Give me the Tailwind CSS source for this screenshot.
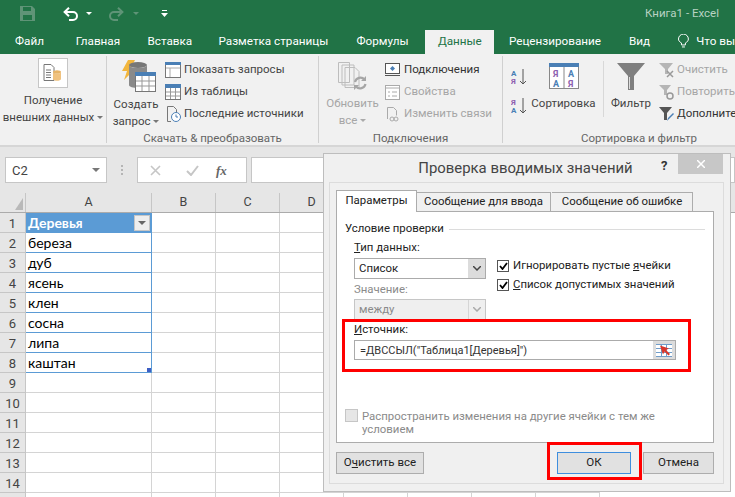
<!DOCTYPE html>
<html lang="ru">
<head>
<meta charset="UTF-8">
<title>Книга1 - Excel</title>
<script src="https://cdn.jsdelivr.net/npm/@tailwindcss/browser@4"></script>
</head>
<body class="font-['Roboto',sans-serif]">
<div class="relative w-[735px] h-[497px] overflow-hidden bg-[#e6e6e6] text-[11.5px] leading-none text-[#444] whitespace-nowrap">

  <!-- заголовок окна -->
  <div class="h-[27px] bg-[#217346] flex items-center relative">
    <svg class="ml-[20px] w-[15px] h-[15px]" viewBox="0 0 15 15"><path d="M0 0h12l3 3v12H0z" fill="#5f9477"/><path d="M3 1h8v4H3zM3 9h9v5H3z" fill="#217346"/></svg>
    <svg class="ml-[28px] w-[16px] h-[14px]" viewBox="0 0 16 14" fill="none" stroke="#fff" stroke-width="2"><path d="M1.500 5H10a4 4 0 0 1 0 8H6"/><path d="M6 .8 1.600 5 6 9.200"/></svg>
    <svg class="ml-[7px] w-[6px] h-[3px]" viewBox="0 0 6 3"><path d="M0 0h6L3 3z" fill="#fff"/></svg>
    <svg class="ml-[16px] w-[16px] h-[14px]" viewBox="0 0 16 14" fill="none" stroke="#5f9477" stroke-width="2"><path d="M14.500 5H6a4 4 0 0 0 0 8h4"/><path d="M10 .8 14.400 5 10 9.200"/></svg>
    <svg class="ml-[9px] w-[6px] h-[3px]" viewBox="0 0 6 3"><path d="M0 0h6L3 3z" fill="#5f9477"/></svg>
    <svg class="ml-[22px] w-[7px] h-[7px]" viewBox="0 0 7 7"><path d="M1 0h5v1H1zM0 3h7L3.500 7z" fill="#fff"/></svg>
    <span class="absolute left-[645px] top-[8px] text-[11.5px] text-[#b9d2c3]">Книга1 - Excel</span>
  </div>

  <!-- вкладки -->
  <div class="h-[27px] pt-[3px] bg-[#217346] flex text-white text-[11.7px]">
    <span class="ml-[15px] w-[29px] flex items-center justify-center">Файл</span>
    <span class="ml-[32px] w-[44px] flex items-center justify-center">Главная</span>
    <span class="ml-[29px] w-[42px] flex items-center justify-center">Вставка</span>
    <span class="ml-[29px] w-[107px] flex items-center justify-center">Разметка страницы</span>
    <span class="ml-[29px] w-[54px] flex items-center justify-center">Формулы</span>
    <span class="ml-[16px] w-[70px] bg-[#f1f1f1] text-[#217346] flex items-center justify-center">Данные</span>
    <span class="ml-[15px] w-[91px] flex items-center justify-center">Рецензирование</span>
    <span class="ml-[29px] w-[20px] flex items-center justify-center">Вид</span>
    <svg class="ml-[29px] mt-[4px] w-[11px] h-[15px]" viewBox="0 0 11 15" fill="none" stroke="#fff"><path d="M3.500 11V9C1.500 8 .5 6.500.5 5a5 5 0 0 1 10 0c0 1.500-1 3-3 4v2zM4 13h3"/></svg>
    <span class="ml-[7px] flex items-center">Что вы</span>
  </div>

  <!-- лента -->
  <div class="h-[93px] bg-[#f1f1f1] border-b-2 border-[#d6d6d6] flex">
    <div class="w-[107px] shrink-0 h-[87px] mt-[2px] border-r border-[#d0d0d0] flex flex-col items-center">
      <div class="w-[30px] h-[30px] mt-[2px] bg-white border border-[#c6c6c6] flex items-center justify-center">
        <svg class="w-[20px] h-[18px]" viewBox="0 0 20 18"><path d="M1 .5h7l3 3v13H1z" fill="#fff" stroke="#777"/><path d="M3 6h5M3 8.500h5M3 11h5M3 13.500h5" stroke="#777"/><ellipse cx="14" cy="8" rx="4" ry="1.800" fill="#e7b468"/><path d="M10 8v7c0 2.400 8 2.400 8 0V8c0 2.400-8 2.400-8 0z" fill="#f0c27f"/></svg>
      </div>
      <span class="mt-[7px]">Получение</span>
      <span class="mt-[5px]">внешних данных <i class="inline-block border-x-[3px] border-t-[3px] border-x-transparent border-t-[#777] align-middle"></i></span>
    </div>

    <div class="w-[212px] shrink-0 h-[87px] mt-[2px] border-r border-[#d0d0d0]">
      <div class="flex h-[69px]">
        <div class="w-[58px] shrink-0 flex flex-col items-center">
          <svg class="w-[34px] h-[32px] ml-[6px] mt-[4px] shrink-0" viewBox="0 0 34 32"><path d="M6 0h7L9 8h5L2 20l3-9H0z" fill="#f2b63d"/><ellipse cx="16" cy="5" rx="9" ry="3" fill="#777"/><path d="M7 5v20c0 4 18 4 18 0V5c0 4-18 4-18 0z" fill="#8a8a8a"/><rect x="13.500" y="12.500" width="20" height="19" fill="#fff" stroke="#777"/><rect x="13" y="12" width="21" height="4" fill="#4a7fb5"/><path d="M14 21h19M14 26h19M20 16v15M27 16v15" stroke="#999"/></svg>
          <span class="mt-[7px]">Создать</span>
          <span class="mt-[5px]">запрос <i class="inline-block border-x-[3px] border-t-[3px] border-x-transparent border-t-[#777] align-middle"></i></span>
        </div>
        <div class="flex flex-col pt-[3px]">
          <div class="h-[23px] flex items-center gap-[3px]">
            <svg class="w-[16px] h-[16px]" viewBox="0 0 16 16"><rect x=".5" y=".5" width="15" height="15" fill="#fff" stroke="#777"/><rect width="16" height="3" fill="#4a7fb5"/><path d="M1 6h14M5 6v9" stroke="#aaa"/></svg>
            <span>Показать запросы</span>
          </div>
          <div class="h-[23px] flex items-center gap-[3px]">
            <svg class="w-[16px] h-[16px]" viewBox="0 0 16 16"><rect x=".5" y=".5" width="15" height="15" fill="#fff" stroke="#777"/><rect width="16" height="4" fill="#4a7fb5"/><path d="M1 8h14M1 12h14M5.500 4v11M10.500 4v11" stroke="#999"/></svg>
            <span>Из таблицы</span>
          </div>
          <div class="h-[23px] flex items-center gap-[3px]">
            <svg class="w-[16px] h-[16px]" viewBox="0 0 16 16"><path d="M2.500.5h6l3 3v4M6 15.500H2.500V.5" fill="none" stroke="#777"/><circle cx="11" cy="11" r="4.500" fill="#fff" stroke="#4a7fb5"/><path d="M11 8.500V11h2" fill="none" stroke="#4a7fb5"/></svg>
            <span>Последние источники</span>
          </div>
        </div>
      </div>
      <div class="text-center mt-[8px] text-[#666]">Скачать &amp; преобразовать</div>
    </div>

    <div class="w-[184px] shrink-0 h-[87px] mt-[2px] border-r border-[#d0d0d0] text-[#a6a6a6]">
      <div class="flex h-[69px]">
        <div class="w-[66px] shrink-0 flex flex-col items-center pl-[1px]">
          <svg class="w-[30px] h-[29px] mt-[6px] shrink-0" viewBox="0 0 30 29" fill="none" stroke="#bdbdbd"><path d="M.5.500h11v20H.5zM4 3h12v20H4zM7 5.500h10l4 4v16H7z" fill="#f1f1f1"/><path d="M17 20a5.500 5.500 0 0 1 9.500-2.500M27.500 22a5.500 5.500 0 0 1-9.500 2.500" stroke="#a6a6a6" stroke-width="2.200"/><path d="M28 14v5h-5zM16 28v-5h5z" fill="#a6a6a6" stroke="none"/></svg>
          <span class="mt-[7px]">Обновить</span>
          <span class="mt-[5px]">все <i class="inline-block border-x-[3px] border-t-[3px] border-x-transparent border-t-[#aaa] align-middle"></i></span>
        </div>
        <div class="flex flex-col pt-[3px]">
          <div class="h-[23px] flex items-center gap-[4px] text-[#333]">
            <svg class="w-[15px] h-[15px]" viewBox="0 0 15 15"><rect x=".5" y=".5" width="14" height="10" fill="#fff" stroke="#555"/><path d="M7.500 3 10 5.500 7.500 8 5 5.500z" fill="#4a7fb5"/><path d="M0 12.500h15" stroke="#555"/></svg>
            <span>Подключения</span>
          </div>
          <div class="h-[23px] flex items-center gap-[4px]">
            <svg class="w-[15px] h-[15px]" viewBox="0 0 15 15"><rect x=".5" y=".5" width="14" height="14" fill="#fff" stroke="#aaa"/><path d="M1 3h13M3 7h2M7 7h5M3 11h2M7 11h5" stroke="#aaa"/></svg>
            <span>Свойства</span>
          </div>
          <div class="h-[23px] flex items-center gap-[4px]">
            <svg class="w-[15px] h-[15px]" viewBox="0 0 15 15" fill="none" stroke="#aaa"><path d="M2.500 12V.5h6l3 3v5"/><circle cx="7" cy="12" r="2"/><circle cx="11" cy="12" r="2"/></svg>
            <span>Изменить связи</span>
          </div>
        </div>
      </div>
      <div class="text-center mt-[8px] text-[#666]">Подключения</div>
    </div>

    <div class="w-[232px] shrink-0 h-[87px] mt-[2px]">
      <div class="flex h-[69px]">
        <div class="w-[28px] shrink-0 pl-[8px] flex flex-col pt-[12px] gap-[11px]">
          <svg class="w-[17px] h-[18px]" viewBox="0 0 17 18"><text x="0" y="8" font-size="8" font-weight="700" fill="#4a7fb5">А</text><text x="0" y="16" font-size="8" font-weight="700" fill="#8d5fb0">Я</text><path d="M12 1v15M9 13l3 3 3-3" fill="none" stroke="#555"/></svg>
          <svg class="w-[17px] h-[18px]" viewBox="0 0 17 18"><text x="0" y="8" font-size="8" font-weight="700" fill="#8d5fb0">Я</text><text x="0" y="16" font-size="8" font-weight="700" fill="#4a7fb5">А</text><path d="M12 1v15M9 13l3 3 3-3" fill="none" stroke="#555"/></svg>
        </div>
        <div class="w-[73px] shrink-0 flex flex-col items-center border-r border-[#d8d8d8] h-[56px] mt-[5px] pr-[7px]">
          <svg class="w-[30px] h-[26px] mt-[2px] shrink-0" viewBox="0 0 30 26"><rect x=".5" y=".5" width="29" height="25" fill="#fff" stroke="#888"/><rect width="30" height="4" fill="#4a7fb5"/><path d="M15 4v22" stroke="#888"/><text x="4" y="14" font-size="9" font-weight="700" fill="#8d5fb0">Я</text><text x="19" y="14" font-size="9" font-weight="700" fill="#4a7fb5">А</text><text x="4" y="24" font-size="9" font-weight="700" fill="#4a7fb5">А</text><text x="19" y="24" font-size="9" font-weight="700" fill="#8d5fb0">Я</text></svg>
          <span class="mt-[9px]">Сортировка</span>
        </div>
        <div class="w-[54px] shrink-0 flex flex-col items-center pt-[7px]">
          <svg class="w-[28px] h-[27px] shrink-0" viewBox="0 0 28 27"><path d="M0 0h28L17 13v14h-6V13z" fill="#7f7f7f"/><path d="M12 14h1v12h-1z" fill="#ddd"/></svg>
          <span class="mt-[8px]">Фильтр</span>
        </div>
        <div class="flex flex-col pt-[3px] pl-[1px] text-[#a6a6a6]">
          <div class="h-[23px] flex items-center gap-[3px]">
            <svg class="w-[15px] h-[15px]" viewBox="0 0 15 15"><path d="M0 0h14L9 6v5H6V6z" fill="#b5b5b5"/><path d="M8 8l6 6M14 8l-6 6" stroke="#999" stroke-width="1.500"/></svg>
            <span>Очистить</span>
          </div>
          <div class="h-[23px] flex items-center gap-[3px]">
            <svg class="w-[15px] h-[15px]" viewBox="0 0 15 15"><path d="M0 0h12L8 5v5H5V5z" fill="#b5b5b5"/><circle cx="11" cy="11" r="3" fill="none" stroke="#999" stroke-width="1.500"/></svg>
            <span>Повторить</span>
          </div>
          <div class="h-[23px] flex items-center gap-[3px] text-[#333]">
            <svg class="w-[15px] h-[15px]" viewBox="0 0 15 15"><path d="M0 0h13L8 6v7H5V6z" fill="#555"/><path d="M8 14l1-3 5-5 1 1-5 5z" fill="#4a7fb5"/></svg>
            <span>Дополнительно</span>
          </div>
        </div>
      </div>
      <div class="text-center mt-[8px] pl-[40px] text-[#666]">Сортировка и фильтр</div>
    </div>
  </div>

  <!-- строка формул -->
  <div class="h-[46px] flex pt-[10px] text-[13px]">
    <div class="ml-[5px] w-[102px] h-[26px] bg-white border border-[#c6c6c6] flex items-center justify-between pl-[6px] pr-[6px]">
      <span>C2</span>
      <i class="border-x-[4px] border-t-[4px] border-x-transparent border-t-[#777]"></i>
    </div>
    <div class="w-[30px] h-[26px] flex flex-col items-center justify-center gap-[2px]">
      <i class="w-[2px] h-[2px] bg-[#b5b5b5]"></i><i class="w-[2px] h-[2px] bg-[#b5b5b5]"></i><i class="w-[2px] h-[2px] bg-[#b5b5b5]"></i>
    </div>
    <div class="w-[110px] h-[26px] bg-white border border-[#c6c6c6] flex items-center pl-[12px]">
      <svg class="w-[11px] h-[11px]" viewBox="0 0 11 11" fill="none" stroke="#c6c6c6" stroke-width="1.600"><path d="m1 1 9 9M10 1l-9 9"/></svg>
      <svg class="ml-[25px] w-[13px] h-[11px]" viewBox="0 0 13 11" fill="none" stroke="#c6c6c6" stroke-width="2"><path d="m1 6 4 4 7-9"/></svg>
      <span class="ml-[17px] font-['Liberation_Serif',serif] italic font-bold text-[#666]">fx</span>
    </div>
    <div class="ml-[4px] flex-1 h-[26px] bg-white border border-[#c6c6c6]"></div>
  </div>

  <!-- лист -->
  <div id="sheet" class="bg-white font-['Lato',sans-serif] text-[14px] text-black"></div>

  <!-- диалог -->
  <div class="absolute left-[323px] top-[153px] w-[408px] h-[339px] bg-[#f0f0f0] border border-[#bdbdbd] flex flex-col text-[11.4px] text-[#222]">
    <div class="w-full h-[28px] flex items-center justify-center relative shrink-0">
      <span class="text-[14.9px] text-[#444] mr-[3px] mt-[1px]">Проверка вводимых значений</span>
      <span class="absolute left-[337px] top-[5px] font-bold text-[#333] text-[13px]">?</span>
      <span class="absolute left-[354px] top-0 w-[45px] h-[20px] bg-[#c7c7c7] flex items-center justify-center">
        <svg class="w-[8px] h-[8px]" viewBox="0 0 8 8" stroke="#fff" stroke-width="1.500"><path d="m0 0 8 8M8 0 0 8"/></svg>
      </span>
    </div>
    <div class="ml-[5px] w-[395px] h-[302px] border border-[#dcdcdc] px-[6px] pt-[7px]">
      <div class="flex items-end h-[22px] relative z-10">
        <div class="w-[81px] h-[22px] bg-white border border-b-0 border-[#acacac] flex items-center justify-center pb-[1px]">Параметры</div>
        <div class="w-[134px] h-[20px] bg-[#f0f0f0] border border-l-0 border-[#acacac] flex items-center justify-center">Сообщение для ввода</div>
        <div class="w-[141px] h-[20px] bg-[#f0f0f0] border border-l-0 border-[#acacac] flex items-center justify-center ml-px">Сообщение об ошибке</div>
      </div>
      <div class="w-[378px] h-[232px] -mt-px bg-white border border-[#acacac] px-[8px] pt-[10px]">
        <div class="flex items-center gap-[5px] h-[14px]">
          <span>Условие проверки</span>
          <i class="w-[258px] h-px bg-[#dcdcdc]"></i>
        </div>
        <div class="pl-[9px]">
          <div class="mt-[6px] h-[15px]"><u>Т</u>ип данных:</div>
          <div class="flex mt-[1px]">
            <div class="w-[132px]">
              <div class="h-[21px] border border-[#ababab] flex items-center justify-between pl-[4px]">
                <span>Список</span>
                <span class="w-[17px] h-full bg-[#dcdcdc] flex items-center justify-center">
                  <svg class="w-[8px] h-[5px]" viewBox="0 0 8 5" fill="none" stroke="#444" stroke-width="1.500"><path d="m0 0 4 4 4-4"/></svg>
                </span>
              </div>
              <div class="mt-[5px] h-[15px] text-[#8a8a8a]">Значение:</div>
              <div class="h-[21px] bg-[#efefef] border border-[#c6c6c6] flex items-center justify-between pl-[4px] text-[#8a8a8a]">
                <span>между</span>
                <span class="w-[17px] h-full flex items-center justify-center border-l border-[#d5d5d5]">
                  <svg class="w-[8px] h-[5px]" viewBox="0 0 8 5" fill="none" stroke="#aaa" stroke-width="1.500"><path d="m0 0 4 4 4-4"/></svg>
                </span>
              </div>
            </div>
            <div class="ml-[11px] flex flex-col gap-[7px] pt-[2px]">
              <label class="flex items-center gap-[4px] h-[12px]">
                <span class="w-[12px] h-[12px] border border-[#555] flex items-center justify-center"><svg class="w-[9px] h-[8px]" viewBox="0 0 9 8" fill="none" stroke="#000" stroke-width="1.800"><path d="m1 4 2.500 3L8 1"/></svg></span>
                <span>Игнорировать пустые <u>я</u>чейки</span>
              </label>
              <label class="flex items-center gap-[4px] h-[12px]">
                <span class="w-[12px] h-[12px] border border-[#555] flex items-center justify-center"><svg class="w-[9px] h-[8px]" viewBox="0 0 9 8" fill="none" stroke="#000" stroke-width="1.800"><path d="m1 4 2.500 3L8 1"/></svg></span>
                <span><u>С</u>писок допустимых значений</span>
              </label>
            </div>
          </div>
          <div class="mt-[4px] h-[15px]"><u>И</u>сточник:</div>
          <div class="mt-[1px] w-[322px] h-[20px] border border-[#ababab] flex items-center justify-between pl-[5px] text-[#333] text-[11px]">
            <span>=ДВССЫЛ("Таблица1[Деревья]")</span>
            <span class="w-[22px] h-full bg-[#dcdcdc] flex items-center justify-center">
              <svg class="w-[16px] h-[13px]" viewBox="0 0 16 13"><rect width="16" height="13" fill="#fff"/><path d="M0 .5h16M0 4.500h16M0 8.500h16M0 12.500h16M5.500 0v13M10.500 0v13" stroke="#6f9cc9"/><path d="M4 1.500l9 3-3 1.500 4 4-1.500 1.500-4-4-1.500 3z" fill="#d9362b"/></svg>
            </span>
          </div>
        </div>
        <div class="mt-[49px] flex text-[#8a8a8a] leading-[13px]">
          <span class="w-[13px] h-[13px] bg-[#e6e6e6] border border-[#c6c6c6] shrink-0"></span>
          <span class="ml-[4px] mt-[1px] w-[340px] whitespace-normal">Распространить изменения на другие ячейки с тем же условием</span>
        </div>
      </div>
      <div class="flex items-center mt-[9px] text-[11.5px]">
        <button class="w-[88px] h-[22px] bg-[#e1e1e1] border border-[#adadad]">О<u>ч</u>истить все</button>
        <button class="ml-[133px] w-[74px] h-[22px] bg-[#e1e1e1] border border-[#3e8ede]">ОК</button>
        <button class="ml-[12px] w-[71px] h-[22px] bg-[#e1e1e1] border border-[#adadad]">Отмена</button>
      </div>
    </div>
  </div>

  <!-- красные рамки поверх диалога -->
  <div class="absolute left-[342px] top-[319px] w-[349px] h-[53px] border-[3px] border-[#ff0000]"></div>
  <div class="absolute left-[547px] top-[442px] w-[95px] h-[38px] border-[3px] border-[#ff0000]"></div>
</div>
<script>
  // сетка листа
  const trees = ['', 'береза', 'дуб', 'ясень', 'клен', 'сосна', 'липа', 'каштан'];
  const cols = ['B', 'C', 'D', '', '', '', ''];
  let html = '<div class="flex h-[20px] bg-[#e6e6e6] text-[#444] font-[\'Roboto\',sans-serif] text-[12.5px] border-b border-[#ababab]">'
    + '<div class="w-[26px] border-r border-[#c6c6c6] relative"><i class="absolute left-[15px] top-[5px] border-l-[8px] border-b-[12px] border-l-transparent border-b-[#b9b9b9]"></i></div>'
    + '<div class="w-[126px] border-r border-[#c6c6c6] flex items-center justify-center">A</div>';
  cols.forEach(c => {
    html += `<div class="w-[64px] shrink-0 border-r border-[#c6c6c6] flex items-center justify-center">${c}</div>`;
  });
  html += '</div>';
  for (let r = 1; r <= 15; r++) {
    html += `<div class="flex h-[20px]"><div class="w-[26px] shrink-0 bg-[#e6e6e6] border-r border-b border-[#c6c6c6] flex items-center justify-center pt-[1px] text-[#444] font-['Roboto',sans-serif] text-[13px]">${r < 15 ? r : ''}</div>`;
    if (r === 1) {
      html += '<div class="w-[126px] shrink-0 bg-[#5b9bd5] border-r border-b border-[#5b9bd5] flex items-center justify-between pl-[2px] pr-[1px] text-white font-bold"><span class="pt-[1px]">Деревья</span><span class="w-[16px] h-[16px] bg-[#eeeeee] border border-[#c6c6c6] flex items-center justify-center"><i class="border-x-[4px] border-t-[4px] border-x-transparent border-t-[#666]"></i></span></div>';
    } else if (r <= 8) {
      html += `<div class="w-[126px] shrink-0 border-r border-b border-[#5b9bd5] flex items-center pl-[2px] pt-[1px] relative">${trees[r - 1]}${r === 8 ? '<i class="absolute right-0 bottom-0 w-[4px] h-[4px] bg-[#3d5fc4]"></i>' : ''}</div>`;
    } else {
      html += '<div class="w-[126px] shrink-0 border-r border-b border-[#d4d4d4]"></div>';
    }
    cols.forEach(() => {
      html += '<div class="w-[64px] shrink-0 border-r border-b border-[#d4d4d4]"></div>';
    });
    html += '</div>';
  }
  document.getElementById('sheet').innerHTML = html;
</script>
</body>
</html>
